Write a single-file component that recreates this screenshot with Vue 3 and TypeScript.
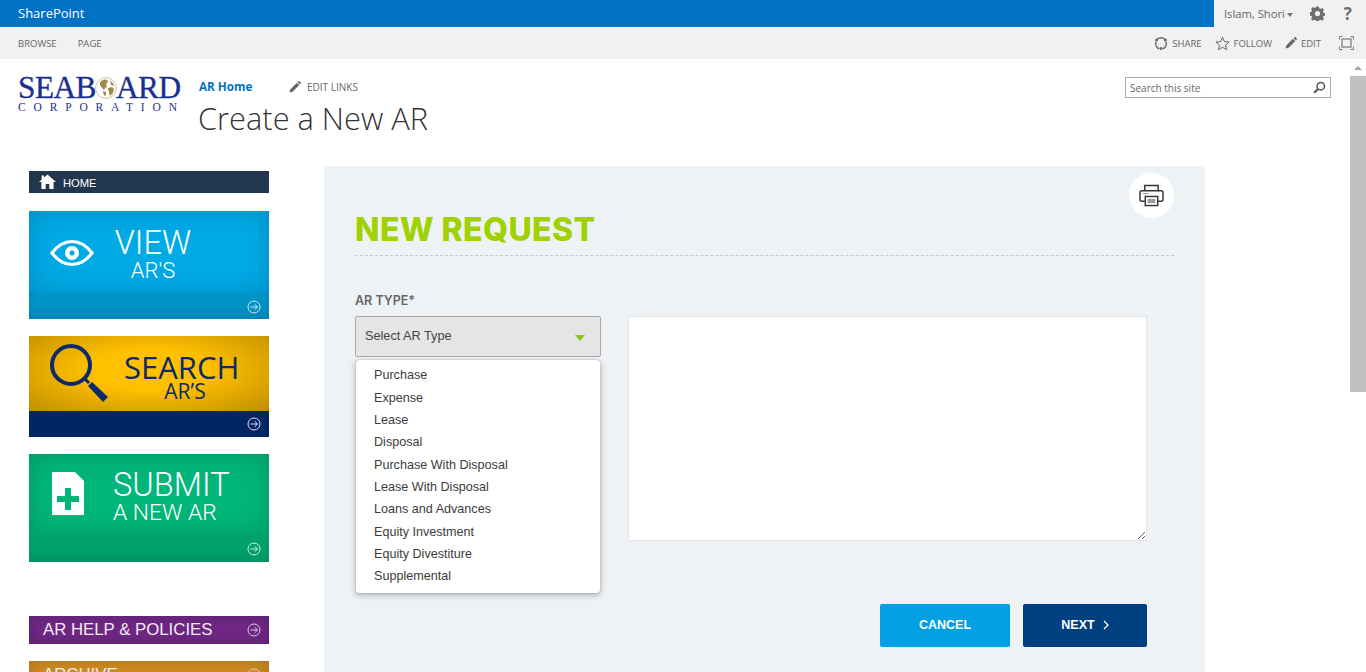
<script setup lang="ts">
interface Tile {
  key: string
  line1: string
  line2: string
}
const tiles: Tile[] = [
  { key: 'view', line1: 'VIEW', line2: "AR'S" },
  { key: 'find', line1: 'SEARCH', line2: 'AR’S' },
  { key: 'submit', line1: 'SUBMIT', line2: 'A NEW AR' },
]
const options: string[] = [
  'Purchase',
  'Expense',
  'Lease',
  'Disposal',
  'Purchase With Disposal',
  'Lease With Disposal',
  'Loans and Advances',
  'Equity Investment',
  'Equity Divestiture',
  'Supplemental',
]
</script>

<template>
  <div class="page">
    <svg class="defs" aria-hidden="true">
      <symbol id="go" viewBox="0 0 14 14">
        <circle cx="7" cy="7" r="6" fill="none" stroke="currentColor" stroke-width="1" />
        <path d="M3.5 7h7M7.6 4.2 10.5 7 7.6 9.8" fill="none" stroke="currentColor" stroke-width="1" />
      </symbol>
      <symbol id="pencil" viewBox="0 0 12 12">
        <path d="M0.5 11.5 1.3 8.4 7.9 1.8 10.2 4.1 3.6 10.7Z M8.6 1.1 9.5 .3a.8.8 0 0 1 1.1 0l1.1 1.1a.8.8 0 0 1 0 1.1L10.9 3.4Z" fill="currentColor" />
      </symbol>
    </svg>

    <header class="suitebar">
      <div class="brand">SharePoint</div>
      <div class="user">
        <span class="user-name">Islam, Shori</span>
        <span class="caret"></span>
        <svg class="gear" viewBox="0 0 16 16" width="15" height="15">
          <path fill-rule="evenodd" fill="#6e6e6e" d="M6.6.5h2.8l.4 2 1.3.6 1.8-1.1 2 2-1.1 1.8.6 1.3 2 .4v2.8l-2 .4-.6 1.3 1.1 1.8-2 2-1.800-1.100-1.300.6-.4 2H6.600l-.4-2-1.300-.6-1.800 1.100-2-2 1.100-1.800-.6-1.300-2-.4V6.600l2-.4.6-1.300L1.100 3.100l2-2 1.800 1.100 1.300-.6ZM8 5.200a2.800 2.800 0 1 0 0 5.600 2.800 2.800 0 0 0 0-5.600Z" />
        </svg>
        <span class="help">?</span>
      </div>
    </header>

    <div class="ribbon">
      <nav class="tabs">
        <span>BROWSE</span>
        <span>PAGE</span>
      </nav>
      <div class="actions">
        <span class="action">
          <svg viewBox="0 0 14 14" width="14" height="14">
            <path d="M3.2 3.2A5.4 5.4 0 0 1 10.8 3.2M12 6a5.4 5.4 0 0 1-3 6.7M5 12.7A5.4 5.4 0 0 1 2 6" fill="none" stroke="#666" stroke-width="1.5" />
            <circle cx="2.6" cy="4" r="1.5" fill="#666" />
            <circle cx="11.4" cy="4" r="1.5" fill="#666" />
            <circle cx="7" cy="12.5" r="1.5" fill="#666" />
          </svg>
          SHARE
        </span>
        <span class="action">
          <svg viewBox="0 0 15 15" width="15" height="15">
            <path d="M7.5 1.2 9.4 5.6l4.7.4-3.600 3.100 1.100 4.600-4.100-2.500-4.100 2.500 1.100-4.600L.9 6l4.700-.4Z" fill="none" stroke="#666" stroke-width="1" />
          </svg>
          FOLLOW
        </span>
        <span class="action">
          <svg class="ink" width="12" height="12"><use href="#pencil" /></svg>
          EDIT
        </span>
        <svg class="focus" viewBox="0 0 15 14" width="15" height="14">
          <path d="M.5 3.5v-3h3M11.5.5h3v3M14.5 10.5v3h-3M3.5 13.5h-3v-3" fill="none" stroke="#777" stroke-width="1" />
          <rect x="3" y="3" width="9" height="8" fill="none" stroke="#777" stroke-width="1.2" />
        </svg>
      </div>
    </div>

    <div class="viewport">
      <div class="content">
        <div class="masthead">
          <div class="logo">
            <div class="logo-word">SEAB<svg class="globe" viewBox="0 0 22 22" width="22" height="22">
                <circle cx="11" cy="11" r="10.4" fill="#fff" stroke="#cfc49b" stroke-width="1" />
                <path d="M5 5c2-2 5-3 7-2l1 2-2 2 1 3-2 1-1 2-2-2-2-3Z" fill="#a08c4a" />
                <path d="M13 11l4-1 2 2-1 4-3 3-1-3Z" fill="#a08c4a" />
                <path d="M15 4l3 2 1 3-3-1Z" fill="#a08c4a" />
                <path d="M8 14l3 1 0 3-2 1Z" fill="#a08c4a" />
              </svg>ARD</div>
            <div class="logo-sub">CORPORATION</div>
          </div>
          <div class="site">
            <div class="site-links">
              <span class="home-link">AR Home</span>
              <span class="edit-links">
                <svg class="ink" width="12" height="12"><use href="#pencil" /></svg>
                EDIT LINKS
              </span>
            </div>
            <h1 class="title">Create a New AR</h1>
          </div>
          <div class="site-search">
            <span>Search this site</span>
            <svg viewBox="0 0 13 13" width="13" height="13">
              <circle cx="7.8" cy="5.2" r="3.7" fill="none" stroke="#555" stroke-width="1.5" />
              <path d="M5 8 1.2 11.8" stroke="#555" stroke-width="2.2" />
            </svg>
          </div>
        </div>

        <div class="body">
          <aside class="sidebar">
            <div class="home-bar">
              <svg viewBox="0 0 16 14" width="17" height="15">
                <path d="M8 .4 16 7.4h-2.3V14H9.7V9.4H6.3V14H2.3V7.4H0L2.5 5.200V1.400h2.200v1.900Z" fill="#fff" />
              </svg>
              HOME
            </div>

            <div class="tiles">
              <div v-for="t in tiles" :key="t.key" class="tile" :class="t.key">
                <div class="tile-main">
                  <svg v-if="t.key === 'view'" class="tile-icon" viewBox="0 0 44 28" width="44" height="28">
                    <path d="M2 14C8 6 15 2.500 22 2.500S36 6 42 14C36 22 29 25.500 22 25.500S8 22 2 14Z" fill="none" stroke="#fff" stroke-width="3.200" />
                    <circle cx="22" cy="14" r="7" fill="#fff" />
                    <circle cx="22" cy="14" r="2.500" fill="#00a9e4" />
                  </svg>
                  <svg v-else-if="t.key === 'find'" class="tile-icon" viewBox="0 0 60 60" width="60" height="60">
                    <circle cx="22" cy="22" r="19" fill="none" stroke="#0c2a6b" stroke-width="4" />
                    <path d="M36 36 40 40" stroke="#0c2a6b" stroke-width="3" />
                    <path d="M39 43 43 39 59 54 54 59Z" fill="#0c2a6b" />
                  </svg>
                  <svg v-else class="tile-icon" viewBox="0 0 32 43" width="32" height="43">
                    <path d="M1 0H23L32 9V42a1 1 0 0 1-1 1H1a1 1 0 0 1-1-1V1a1 1 0 0 1 1-1Z" fill="#fff" />
                    <path d="M13 16h6v8h8v6h-8v8h-6v-8H5v-6h8Z" fill="#00b377" />
                  </svg>
                  <div class="tile-text">
                    <div class="line1">{{ t.line1 }}</div>
                    <div class="line2">{{ t.line2 }}</div>
                  </div>
                </div>
                <div class="tile-band">
                  <svg class="go" width="14" height="14"><use href="#go" /></svg>
                </div>
              </div>
            </div>

            <div class="strip help-strip">
              <span>AR HELP &amp; POLICIES</span>
              <svg class="go" width="14" height="14"><use href="#go" /></svg>
            </div>
            <div class="strip archive-strip">
              <span>ARCHIVE</span>
              <svg class="go" width="14" height="14"><use href="#go" /></svg>
            </div>
          </aside>

          <main class="panel">
            <button class="print" type="button" aria-label="Print">
              <svg viewBox="0 0 26 24" width="25" height="23">
                <path d="M6 7V1.500H20V7" fill="none" stroke="#333" stroke-width="1.500" />
                <path d="M6 18H3a2 2 0 0 1-2-2V9a2 2 0 0 1 2-2H23a2 2 0 0 1 2 2v7a2 2 0 0 1-2 2H20" fill="none" stroke="#333" stroke-width="1.500" />
                <rect x="6.500" y="13" width="13" height="9.500" fill="#fff" stroke="#333" stroke-width="1.500" />
                <rect x="9" y="15.500" width="8" height="4.500" fill="#9a9a9a" />
                <path d="M4 10h6" stroke="#888" stroke-width="1" />
              </svg>
            </button>
            <h2 class="heading">NEW REQUEST</h2>
            <label class="field-label">AR TYPE*</label>
            <div class="form-row">
              <div class="select-wrap">
                <div class="select">
                  <span>Select AR Type</span>
                  <span class="select-arrow"></span>
                </div>
                <ul class="menu">
                  <li v-for="o in options" :key="o">{{ o }}</li>
                </ul>
              </div>
              <textarea class="notes"></textarea>
            </div>
            <div class="buttons">
              <button class="btn cancel" type="button">CANCEL</button>
              <button class="btn next" type="button">
                NEXT
                <svg viewBox="0 0 6 10" width="6" height="10">
                  <path d="M1 1 5 5 1 9" fill="none" stroke="#fff" stroke-width="1.300" />
                </svg>
              </button>
            </div>
          </main>
        </div>
      </div>

      <div class="scrollbar">
        <span class="scroll-up"></span>
        <span class="scroll-thumb"></span>
      </div>
    </div>
  </div>
</template>

<style>
html,
body {
  margin: 0;
  height: 672px;
  overflow: hidden;
  background: #fff;
}
</style>

<style scoped>
.page {
  height: 672px;
  overflow: hidden;
  display: flex;
  flex-direction: column;
  font-family: "Open Sans", "Liberation Sans", sans-serif;
  color: #444;
}
.defs {
  position: absolute;
  width: 0;
  height: 0;
}
.suitebar {
  height: 27px;
  flex: none;
  display: flex;
  justify-content: space-between;
  background: #0072c6;
}
.brand {
  padding-left: 18px;
  color: #fff;
  font-size: 13px;
  line-height: 27px;
}
.user {
  width: 152px;
  box-sizing: border-box;
  padding-left: 10px;
  background: #f1f1f1;
  display: flex;
  align-items: center;
  color: #666;
  font-size: 11.200px;
}
.caret {
  margin: 2px 0 0 2px;
  border-left: 3.500px solid transparent;
  border-right: 3.500px solid transparent;
  border-top: 4px solid #777;
}
.gear {
  margin-left: 17px;
}
.help {
  margin-left: 19px;
  font-size: 17px;
  font-weight: 700;
  color: #6e6e6e;
}
.ribbon {
  height: 32px;
  flex: none;
  background: #f1f1f1;
  display: flex;
  justify-content: space-between;
  align-items: center;
  color: #666;
  font-size: 9.500px;
}
.tabs {
  padding-left: 18px;
  display: flex;
  gap: 21px;
}
.actions {
  padding-right: 12px;
  display: flex;
  align-items: center;
}
.action {
  display: flex;
  align-items: center;
  gap: 4px;
  margin-right: 13px;
}
.ink {
  color: #666;
}
.focus {
  margin-left: 5px;
}
.viewport {
  flex: 1;
  min-height: 0;
  display: flex;
}
.content {
  flex: 1;
  min-width: 0;
  overflow: hidden;
}
.masthead {
  height: 107px;
  position: relative;
  display: flex;
  padding: 17px 0 0 18px;
  box-sizing: border-box;
}
.logo {
  width: 181px;
  flex: none;
  color: #1a2f8f;
  font-family: "Liberation Serif", serif;
}
.logo-word {
  display: flex;
  align-items: center;
  font-size: 31.300px;
  line-height: 24px;
  letter-spacing: -0.5px;
  -webkit-text-stroke: 0.35px #1a2f8f;
}
.globe {
  flex: none;
  margin: 0 -1px;
}
.logo-sub {
  margin-top: 1px;
  font-size: 11.500px;
  letter-spacing: 7.850px;
  line-height: 12px;
  white-space: nowrap;
}
.site-links {
  display: flex;
  align-items: center;
  height: 22px;
}
.home-link {
  color: #0072c6;
  font-weight: 700;
  font-size: 11.700px;
  width: 90px;
  margin-bottom: 2px;
}
.edit-links {
  display: flex;
  align-items: center;
  gap: 6px;
  font-size: 10px;
  color: #666;
}
.title {
  margin: 0 0 0 -1px;
  font-size: 30.800px;
  font-weight: 300;
  line-height: 40px;
  color: #333;
}
.site-search {
  position: absolute;
  left: 1125px;
  top: 18px;
  width: 206px;
  height: 21px;
  box-sizing: border-box;
  border: 1px solid #ababab;
  background: #fff;
  padding: 0 4px;
  display: flex;
  justify-content: space-between;
  align-items: center;
  font-size: 10px;
  color: #666;
}
.body {
  display: flex;
  align-items: flex-start;
  padding-left: 29px;
}
.sidebar {
  width: 240px;
  flex: none;
  padding-top: 5px;
  font-family: "Liberation Sans", sans-serif;
}
.home-bar {
  height: 22px;
  box-sizing: border-box;
  background: #22374e;
  color: #fff;
  display: flex;
  align-items: center;
  gap: 7px;
  padding: 1px 0 0 10px;
  font-size: 11.200px;
}
.home-bar svg {
  margin-bottom: 2px;
}
.tiles {
  margin-top: 18px;
  display: flex;
  flex-direction: column;
  gap: 17px;
}
.tile {
  display: flex;
  flex-direction: column;
  color: #fff;
  font-family: Roboto, sans-serif;
  font-weight: 300;
}
.tile-main {
  position: relative;
  flex: none;
}
.tile-icon {
  position: absolute;
}
.tile-text {
  position: absolute;
  text-align: center;
}
.tile-band {
  flex: none;
  box-sizing: border-box;
  display: flex;
  justify-content: flex-end;
  align-items: flex-end;
  padding: 0 8px 6px 0;
  color: #cfeaf5;
}
.view .tile-main {
  height: 81px;
  background: #00aae5;
  box-shadow: inset 0 0 26px rgba(0, 80, 130, 0.32);
}
.view .tile-icon {
  left: 21px;
  top: 28px;
}
.view .tile-text {
  left: 75px;
  width: 98px;
  top: 14px;
}
.view .line1 {
  font-size: 32.500px;
  line-height: 36px;
}
.view .line2 {
  font-size: 22px;
  line-height: 20px;
}
.view .tile-band {
  height: 27px;
  padding-bottom: 5px;
  background: #0094c7;
  box-shadow: inset 0 -8px 12px -4px rgba(0, 60, 100, 0.25);
}
.find {
  color: #0c2a6b;
  font-family: "Open Sans", sans-serif;
  font-weight: 400;
}
.find .tile-main {
  height: 75px;
  background: radial-gradient(ellipse at 50% 45%, #ffc000 35%, #c08e00 100%);
}
.find .tile-icon {
  left: 20px;
  top: 7px;
}
.find .tile-text {
  left: 95px;
  width: 115px;
  top: 16px;
}
.find .line1 {
  font-size: 31px;
  line-height: 30px;
}
.find .line2 {
  padding-left: 7px;
  font-size: 21px;
  line-height: 18px;
  font-weight: 500;
}
.find .tile-band {
  height: 26px;
  background: #002663;
  color: #dfe4ee;
}
.submit .tile-main {
  height: 81px;
  background: #00b67a;
  box-shadow: inset 0 0 26px rgba(0, 80, 55, 0.3);
}
.submit .tile-icon {
  left: 23px;
  top: 18px;
}
.submit .tile-text {
  left: 84px;
  top: 14px;
  text-align: left;
}
.submit .line1 {
  font-size: 32.600px;
  line-height: 34px;
}
.submit .line2 {
  font-size: 22.800px;
  line-height: 21px;
}
.submit .tile-band {
  height: 27px;
  background: #00a26c;
  box-shadow: inset 0 -8px 12px -4px rgba(0, 70, 50, 0.2);
}
.strip {
  height: 28px;
  display: flex;
  align-items: center;
  justify-content: space-between;
  padding: 0 8px 0 14px;
  color: #f3ecf5;
  font-size: 16.800px;
  box-shadow: inset 0 0 14px rgba(0, 0, 0, 0.18);
}
.help-strip {
  margin-top: 54px;
  background: #6f2784;
}
.archive-strip {
  margin-top: 17px;
  background: #cf8a20;
}
.go {
  flex: none;
}
.strip .go {
  color: #dccbe4;
}
.panel {
  position: relative;
  margin: 0 0 0 55px;
  width: 881px;
  height: 506px;
  flex: none;
  box-sizing: border-box;
  padding: 0 31px;
  background: #eff2f5;
  font-family: "Liberation Sans", sans-serif;
}
.print {
  position: absolute;
  top: 7px;
  right: 31px;
  width: 45px;
  height: 45px;
  border: 0;
  padding: 0;
  border-radius: 50%;
  background: #fff;
  display: flex;
  align-items: center;
  justify-content: center;
}
.heading {
  margin: 0;
  padding-top: 45px;
  height: 90px;
  box-sizing: border-box;
  border-bottom: 1px dashed #c9c9c9;
  color: #a0d100;
  font-family: Inter, sans-serif;
  font-weight: 800;
  font-size: 32px;
  letter-spacing: 0.4px;
  line-height: 38px;
}
.field-label {
  display: block;
  margin-top: 37px;
  height: 23px;
  font-family: Inter, sans-serif;
  font-weight: 600;
  font-size: 12.500px;
  line-height: 16px;
  color: #666;
}
.form-row {
  display: flex;
  gap: 27px;
  align-items: flex-start;
}
.select-wrap {
  position: relative;
  width: 246px;
  flex: none;
}
.select {
  height: 41px;
  box-sizing: border-box;
  border: 1px solid #a9a9a9;
  border-radius: 2px;
  background: #e5e5e5;
  padding: 0 15px 2px 9px;
  display: flex;
  align-items: center;
  justify-content: space-between;
  font-size: 12.700px;
  color: #444;
}
.select-arrow {
  margin-top: 5px;
  border-left: 5px solid transparent;
  border-right: 5px solid transparent;
  border-top: 6px solid #8dc21f;
}
.menu {
  position: absolute;
  top: 44px;
  left: 1px;
  width: 244px;
  height: 233px;
  box-sizing: border-box;
  margin: 0;
  padding: 4.200px 0 0;
  list-style: none;
  background: #fff;
  border-radius: 3px;
  box-shadow: 0 0 1px rgba(0, 0, 0, 0.5), 0 2px 6px rgba(0, 0, 0, 0.3);
  font-size: 12.600px;
  line-height: 22.350px;
  color: #3c3c3c;
}
.menu li {
  padding-left: 18px;
}
.notes {
  display: block;
  width: 519px;
  height: 225px;
  box-sizing: border-box;
  border: 1px solid #e3e5e8;
  background: #fff;
  outline: 0;
  margin: 0;
}
.buttons {
  margin-top: 63px;
  width: 792px;
  display: flex;
  justify-content: flex-end;
  gap: 13px;
}
.btn {
  height: 43px;
  border: 0;
  border-radius: 2px;
  padding: 0 0 2px;
  color: #fff;
  font-family: "Liberation Sans", sans-serif;
  font-weight: 700;
  font-size: 12.500px;
  display: flex;
  align-items: center;
  justify-content: center;
  gap: 8px;
}
.cancel {
  width: 130px;
  background: #00a0e3;
}
.next {
  width: 124px;
  background: #004080;
}
.scrollbar {
  width: 16px;
  flex: none;
  background: #fff;
  display: flex;
  flex-direction: column;
  align-items: center;
}
.scroll-up {
  margin-top: 7px;
  border-left: 4px solid transparent;
  border-right: 4px solid transparent;
  border-bottom: 4px solid #a3a3a3;
}
.scroll-thumb {
  margin-top: 6px;
  width: 16px;
  height: 316px;
  background: #c1c1c1;
}
</style>
